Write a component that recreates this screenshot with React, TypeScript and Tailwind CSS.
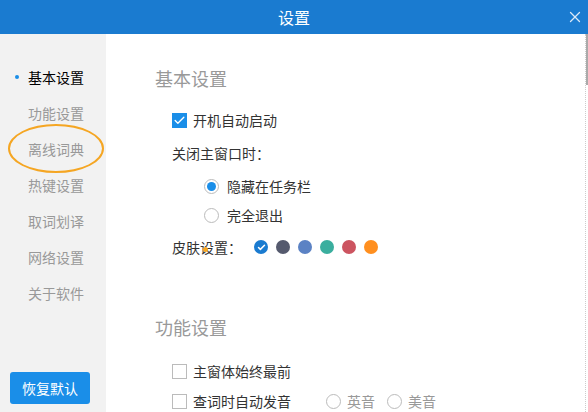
import { Check, X } from 'lucide-react';

const navItems = ['基本设置', '功能设置', '离线词典', '热键设置', '取词划译', '网络设置', '关于软件'];

const skins = ['#1a7bd0', '#555a6e', '#5b82c4', '#3aae9e', '#cc5460', '#ff8f1f'];

function Box({ checked = false }: { checked?: boolean }) {
  return checked ? (
    <span className="flex h-[15px] w-[15px] items-center justify-center bg-[#1a8ee8]">
      <Check size={13} strokeWidth={2.5} className="text-white" />
    </span>
  ) : (
    <span className="h-[15px] w-[15px] border border-[#bbb] bg-white" />
  );
}

function Radio({ checked = false }: { checked?: boolean }) {
  return (
    <span className="flex h-[15px] w-[15px] items-center justify-center rounded-full border border-[#bbb] bg-white">
      {checked && <span className="h-[9px] w-[9px] rounded-full bg-[#1a8ee8]" />}
    </span>
  );
}

export default function App() {
  return (
    <div
      className="flex h-[412px] w-[588px] flex-col overflow-hidden bg-white text-[14px] text-[#333]"
      style={{ fontFamily: '"Noto Sans CJK SC", "Noto Sans", sans-serif' }}
    >
      <header className="relative flex h-[34px] shrink-0 items-center justify-center bg-[#1a7bd0] text-[16px] text-white">
        设置
        <X size={18} strokeWidth={1.75} className="absolute right-[4px] top-[8px] text-[#dbe9f7]" />
      </header>

      <div className="flex min-h-0 flex-1">
        <aside className="relative flex w-[106px] shrink-0 flex-col bg-[#f2f2f2]">
          <ul className="flex flex-col pt-[32px]">
            {navItems.map((item, i) => (
              <li key={item} className="relative flex h-[36px] items-start pl-[28px] leading-[22px]">
                {i === 0 && <span className="absolute left-[15px] top-[9px] h-[4px] w-[4px] rounded-full bg-[#1a8ee8]" />}
                <span className={i === 0 ? 'text-[14px] text-black' : 'text-[14px] text-[#999]'}>{item}</span>
              </li>
            ))}
          </ul>
          <span className="absolute left-[8px] top-[90px] h-[49px] w-[96px] rounded-[50%] border-2 border-[#f5a623]" />
          <button className="absolute bottom-[8px] left-[10px] h-[32px] w-[80px] rounded-[3px] bg-[#1a8ee8] text-[14px] text-white">
            恢复默认
          </button>
        </aside>

        <main className="relative flex-1 pl-[49px]">
          <h2 className="mt-[32px] text-[18px] leading-[24px] text-[#999]">基本设置</h2>

          <div className="mt-[20px] flex flex-col pl-[17px]">
            <label className="flex h-[20px] items-center gap-[6px]">
              <Box checked />
              <span>开机自动启动</span>
            </label>
            <div className="mt-[13px] h-[20px] leading-[20px]">关闭主窗口时：</div>
            <label className="mt-[13px] flex h-[20px] items-center gap-[8px] pl-[32px]">
              <Radio checked />
              <span>隐藏在任务栏</span>
            </label>
            <label className="mt-[9px] flex h-[20px] items-center gap-[8px] pl-[32px]">
              <Radio />
              <span>完全退出</span>
            </label>
            <div className="relative mt-[12px] flex h-[20px] items-center">
              <span>皮肤设置：</span>
              <span className="absolute left-[31px] top-[10px] h-[5px] w-[5px] rounded-full bg-[#f5a623]" />
              <div className="ml-[12px] flex gap-[8px]">
                {skins.map((c, i) => (
                  <span
                    key={c}
                    className="flex h-[14px] w-[14px] items-center justify-center rounded-full"
                    style={{ backgroundColor: c }}
                  >
                    {i === 0 && <Check size={9} strokeWidth={4} className="text-white" />}
                  </span>
                ))}
              </div>
            </div>
          </div>

          <h2 className="mt-[58px] text-[18px] leading-[24px] text-[#999]">功能设置</h2>

          <div className="mt-[22px] flex flex-col pl-[17px]">
            <label className="flex h-[20px] items-center gap-[6px]">
              <Box />
              <span>主窗体始终最前</span>
            </label>
            <div className="mt-[10px] flex h-[20px] items-center">
              <label className="flex items-center gap-[6px]">
                <Box />
                <span>查词时自动发音</span>
              </label>
              <label className="ml-[35px] flex items-center gap-[6px] text-[#999]">
                <Radio />
                <span>英音</span>
              </label>
              <label className="ml-[12px] flex items-center gap-[6px] text-[#999]">
                <Radio />
                <span>美音</span>
              </label>
            </div>
          </div>

          <div className="absolute right-0 top-0 h-full w-[3px] border-l border-dotted border-[#ccc]">
            <div className="h-[51px] w-[3px] bg-[#aaa]" />
          </div>
        </main>
      </div>
    </div>
  );
}
